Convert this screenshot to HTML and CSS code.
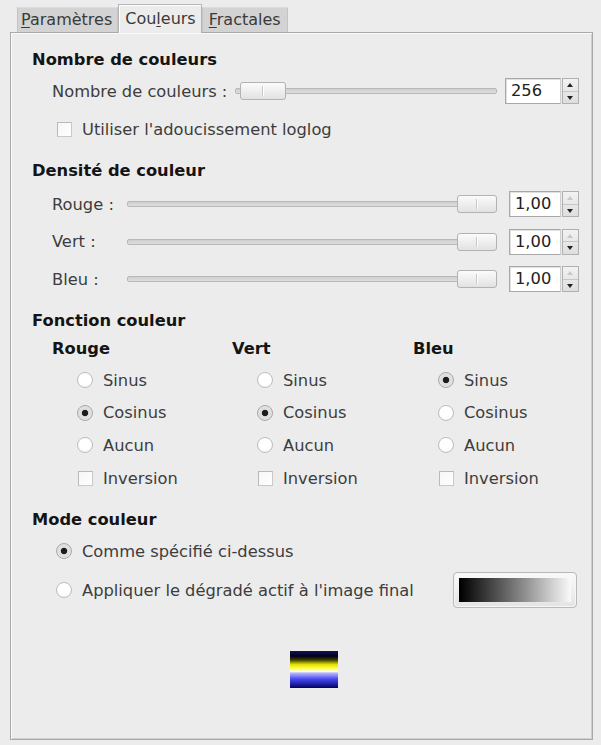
FILE: index.html
```html
<!DOCTYPE html>
<html lang="fr">
<head>
<meta charset="utf-8">
<title>Couleurs</title>
<link rel="stylesheet" href="styles.css">
</head>
<body>
<div class="window">
  <div class="tabs">
    <div class="tab tab-first"><u>P</u>aramètres</div>
    <div class="tab active">Cou<u>l</u>eurs</div>
    <div class="tab tab-last"><u>F</u>ractales</div>
  </div>
  <div class="panel">
    <h2 class="h first">Nombre de couleurs</h2>
    <div class="row slider-row">
      <span class="label">Nombre de couleurs :</span>
      <div class="scale"><div class="trough"></div><div class="thumb thumb-min"></div></div>
      <div class="spin spin-wide"><div class="entry">256</div><div class="arrows"><span class="up"></span><span class="down"></span></div></div>
    </div>
    <div class="row check-row">
      <span class="check"></span><span class="label">Utiliser l'adoucissement loglog</span>
    </div>

    <h2 class="h h-dens">Densité de couleur</h2>
    <div class="dens">
      <div class="row dens-row">
        <span class="label dlabel">Rouge :</span>
        <div class="scale"><div class="trough"></div><div class="thumb thumb-max"></div></div>
        <div class="spin"><div class="entry">1,00</div><div class="arrows"><span class="up off"></span><span class="down"></span></div></div>
      </div>
      <div class="row dens-row">
        <span class="label dlabel">Vert :</span>
        <div class="scale"><div class="trough"></div><div class="thumb thumb-max"></div></div>
        <div class="spin"><div class="entry">1,00</div><div class="arrows"><span class="up off"></span><span class="down"></span></div></div>
      </div>
      <div class="row dens-row">
        <span class="label dlabel">Bleu :</span>
        <div class="scale"><div class="trough"></div><div class="thumb thumb-max"></div></div>
        <div class="spin"><div class="entry">1,00</div><div class="arrows"><span class="up off"></span><span class="down"></span></div></div>
      </div>
    </div>

    <h2 class="h h-func">Fonction couleur</h2>
    <div class="cols">
      <div class="col">
        <div class="colhead">Rouge</div>
        <div class="opt first-opt"><span class="radio"></span><span class="label">Sinus</span></div>
        <div class="opt"><span class="radio on"></span><span class="label">Cosinus</span></div>
        <div class="opt"><span class="radio"></span><span class="label">Aucun</span></div>
        <div class="opt"><span class="check"></span><span class="label">Inversion</span></div>
      </div>
      <div class="col">
        <div class="colhead">Vert</div>
        <div class="opt first-opt"><span class="radio"></span><span class="label">Sinus</span></div>
        <div class="opt"><span class="radio on"></span><span class="label">Cosinus</span></div>
        <div class="opt"><span class="radio"></span><span class="label">Aucun</span></div>
        <div class="opt"><span class="check"></span><span class="label">Inversion</span></div>
      </div>
      <div class="col">
        <div class="colhead">Bleu</div>
        <div class="opt first-opt"><span class="radio on"></span><span class="label">Sinus</span></div>
        <div class="opt"><span class="radio"></span><span class="label">Cosinus</span></div>
        <div class="opt"><span class="radio"></span><span class="label">Aucun</span></div>
        <div class="opt"><span class="check"></span><span class="label">Inversion</span></div>
      </div>
    </div>

    <h2 class="h h-mode">Mode couleur</h2>
    <div class="row mode-row first-mode"><span class="radio on"></span><span class="label">Comme spécifié ci-dessus</span></div>
    <div class="row mode-row grad-row">
      <span class="radio"></span><span class="label">Appliquer le dégradé actif à l'image final</span>
      <div class="gradbtn"><div class="gradfill"></div></div>
    </div>

    <div class="preview-wrap"><div class="preview"></div></div>
  </div>
</div>
</body>
</html>
```

FILE: styles.css
```css
* { box-sizing: border-box; }
html, body { margin: 0; padding: 0; }
body {
  width: 601px;
  height: 745px;
  background: #ececec;
  font-family: "DejaVu Sans", "Liberation Sans", sans-serif;
  font-size: 16.3px;
  color: #3d3d3d;
  overflow: hidden;
}
.window { padding-top: 4px; }

/* tabs */
.tabs {
  display: flex;
  align-items: flex-end;
  height: 28px;
  padding-left: 17px;
  position: relative;
  z-index: 2;
}
.tab {
  height: 25px;
  line-height: 24px;
  background: #d3d3d3;
  border: 1px solid #c4c4c4;
  border-top-color: #dcdcdc;
  border-bottom: none;
  color: #3a3a3a;
  font-size: 16px;
}
.tab-first { padding: 0 5px 0 3px; }
.tab-last { padding: 0 6px 0 6px; }
.tab u { text-decoration: underline; text-underline-offset: 2px; }
.tab.active {
  height: 29px;
  line-height: 27px;
  padding: 0 5px 0 6px;
  background: #ececec;
  border: 1px solid #b4b4b4;
  border-bottom: none;
  box-shadow: inset 1px 1px 0 #fff;
  margin-bottom: -1px;
}

/* panel */
.panel {
  margin-left: 10px;
  width: 583px;
  height: 708px;
  border: 1px solid #a9a9a9;
  box-shadow: inset 1px 1px 0 #fafafa, inset -1px -1px 0 #cfcfcf;
  padding: 17px 13px 0 21px;
  display: flex;
  flex-direction: column;
}
.h {
  margin: 0;
  height: 20px;
  line-height: 20px;
  font-size: 16.3px;
  font-weight: bold;
  color: #141414;
}
.h-dens { margin-top: 20px; }
.h-func { margin-top: 17px; }
.h-mode { margin-top: 22px; }

.row {
  display: flex;
  align-items: center;
  padding-left: 20px;
}
.label { white-space: nowrap; }

/* sliders */
.slider-row { margin-top: 6px; height: 30px; }
.slider-row .label { margin-right: 8px; }
.scale {
  position: relative;
  flex: 1;
  height: 30px;
}
.trough {
  position: absolute;
  left: 0; right: 0;
  top: 12px;
  height: 6px;
  border: 1px solid #b8b8b8;
  border-radius: 2px;
  background: linear-gradient(#cfcfcf, #dedede);
}
.thumb {
  position: absolute;
  top: 6px;
  width: 40px;
  height: 18px;
  border: 1px solid #b2b2b2;
  border-radius: 3px;
  background: linear-gradient(#fbfbfb, #e2e2e2);
}
.thumb::before, .thumb::after {
  content: "";
  position: absolute;
  top: 3px;
  bottom: 3px;
  width: 1px;
}
.thumb::before { left: 50%; margin-left: -1px; background: #c8c8c8; }
.thumb::after { left: 50%; background: #ffffff; }
.thumb-min { left: 5px; width: 46px; }
.thumb-max { right: 0; }

.spin {
  display: flex;
  height: 26px;
  margin-left: 12px;
}
.spin-wide { margin-left: 8px; }
.entry {
  width: 52px;
  height: 26px;
  line-height: 24px;
  padding-left: 5px;
  background: #fff;
  border: 1px solid #a8a8a8;
  border-right-color: #d0d0d0;
  box-shadow: inset 1px 1px 0 #e0e0e0;
  color: #222;
}
.spin-wide .entry { width: 56px; }
.arrows {
  width: 17px;
  height: 26px;
  margin-left: 1px;
  border: 1px solid #b0b0b0;
  background: linear-gradient(#f2f2f2, #dedede);
  display: flex;
  flex-direction: column;
}
.arrows span {
  flex: 1;
  position: relative;
}
.arrows .up { border-bottom: 1px solid #c6c6c6; }
.arrows span::after {
  content: "";
  position: absolute;
  left: 4px;
  width: 0; height: 0;
  border-left: 3.5px solid transparent;
  border-right: 3.5px solid transparent;
}
.arrows .up::after { top: 4px; border-bottom: 4px solid #222; }
.arrows .down::after { top: 4px; border-top: 4px solid #222; }
.arrows .up.off::after { border-bottom-color: #c8c8c8; }

/* check */
.check-row { margin-top: 11px; height: 24px; padding-left: 25px; }
.check {
  width: 15px;
  height: 15px;
  flex: none;
  border: 1px solid #c9c9c9;
  border-top-color: #b9b9b9;
  border-left-color: #b9b9b9;
  background: linear-gradient(135deg, #f6f6f6, #ffffff);
  margin-right: 10px;
}

/* density */
.dens {
  display: flex;
  flex-direction: column;
  gap: 7.5px;
  margin-top: 8px;
}
.dens-row { height: 30px; }
.dlabel { width: 75px; flex: none; }

/* function columns */
.cols {
  display: grid;
  grid-template-columns: 180px 181px 1fr;
  padding-left: 20px;
  margin-top: 8px;
}
.colhead {
  height: 20px;
  line-height: 20px;
  font-weight: bold;
  color: #141414;
}
.opt {
  display: flex;
  align-items: center;
  height: 20px;
  margin-top: 12.7px;
  padding-left: 25px;
}
.opt.first-opt { margin-top: 11px; }
.radio {
  width: 16px;
  height: 16px;
  flex: none;
  border-radius: 50%;
  border: 1px solid #bdbdbd;
  background: radial-gradient(circle at 50% 40%, #ffffff 0, #ffffff 50%, #efefef 100%);
  margin-right: 10px;
}
.radio.on {
  background: radial-gradient(circle, #1c1c1c 0, #1c1c1c 2.8px, #dcdcdc 3.6px, #e8e8e8 100%);
  border-color: #a8a8a8;
}
.opt .check { margin-left: 1px; margin-right: 10px; }

/* mode */
.mode-row { padding-left: 24px; height: 20px; }
.mode-row .radio { margin-right: 10px; }
.first-mode { margin-top: 11px; }
.grad-row { margin-top: 11px; height: 36px; }
.gradbtn {
  margin-left: auto;
  margin-right: 2px;
  width: 124px;
  height: 36px;
  border: 1px solid #b9b9b9;
  border-radius: 4px;
  background: linear-gradient(#fafafa, #e4e4e4);
  box-shadow: inset 0 0 0 1px #f6f6f6;
  padding: 5px 5px 5px 5px;
}
.gradfill {
  height: 100%;
  border-left: 1px solid #000;
  background: linear-gradient(to right, #000 0%, #141414 8%, #4e4e4e 32%, #8e8e8e 58%, #d2d2d2 84%, #fafafa 100%);
}

/* preview */
.preview-wrap {
  margin-top: 43px;
  display: flex;
  padding-left: 258px;
}
.preview {
  width: 48px;
  height: 37px;
  background: linear-gradient(#12125e 0%, #000018 14%, #3c3c00 24%, #dede00 36%, #ffff40 46%, #fffff0 55%, #b4b4ff 60%, #4848f2 76%, #000064 100%);
}
```
